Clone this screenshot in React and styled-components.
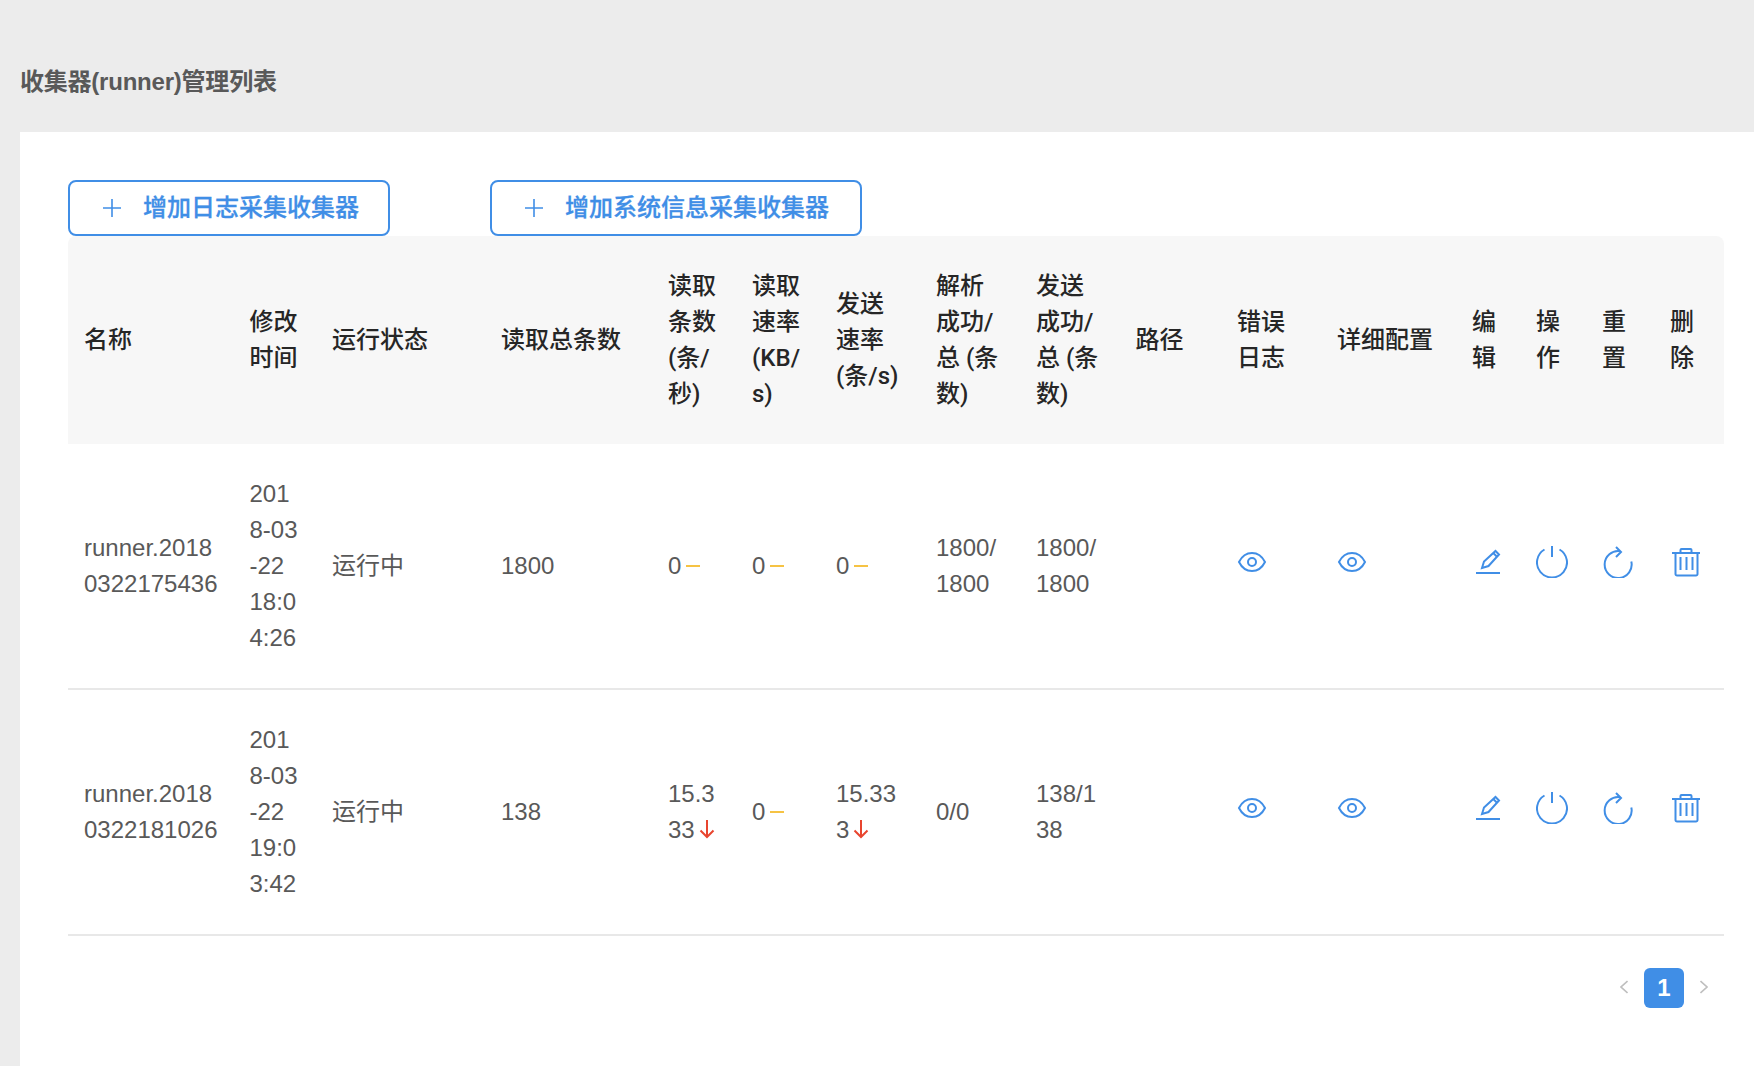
import styled, { createGlobalStyle } from 'styled-components';

const GlobalStyle = createGlobalStyle`
  html, body {
    margin: 0;
    padding: 0;
    background: #ececec;
  }
  * {
    box-sizing: border-box;
  }
`;

const Page = styled.div`
  min-height: 1066px;
  display: flex;
  flex-direction: column;
  background: #ececec;
  font-family: 'Liberation Sans', 'Noto Sans CJK SC', sans-serif;
  font-size: 24px;
  line-height: 36px;
  color: #595959;
`;

const PageHeader = styled.div`
  height: 132px;
  padding: 64px 0 0 20px;
  font-weight: 700;
  letter-spacing: -0.22px;
  color: #595959;
`;

const Content = styled.div`
  flex: 1;
  margin-left: 20px;
  padding: 48px 30px 0 48px;
  background: #fff;
`;

const Toolbar = styled.div`
  display: flex;
  gap: 100px;
`;

const AddButton = styled.button`
  height: 56px;
  padding: 0 ${(p) => p.$right}px 0 33px;
  display: flex;
  align-items: center;
  gap: 22px;
  background: #fff;
  border: 2px solid #408ee6;
  border-radius: 8px;
  color: #408ee6;
  font: inherit;
  font-weight: 500;
  -webkit-text-stroke: 0.3px #408ee6;
`;

const Table = styled.table`
  width: 100%;
  table-layout: fixed;
  border-collapse: separate;
  border-spacing: 0;
`;

const Col = styled.col`
  width: ${(p) => p.$w}px;
`;

const Th = styled.th`
  padding: 32px 16px;
  background: #f7f7f7;
  color: #262626;
  font-family: Roboto, 'Noto Sans CJK SC', sans-serif;
  font-weight: 500;
  text-align: left;
  vertical-align: middle;
  word-break: break-all;

  &:first-child {
    border-top-left-radius: 8px;
  }
  &:last-child {
    border-top-right-radius: 8px;
  }
`;

const Td = styled.td`
  padding: 32px 16px;
  border-bottom: 2px solid #e8e8e8;
  vertical-align: middle;
  word-break: break-all;
`;

const Icon = styled.svg`
  display: inline-block;
  width: 32px;
  height: 32px;
  vertical-align: -2px;
  fill: none;
  stroke: #408ee6;
  stroke-width: 2;
`;

const Trend = styled.svg`
  display: inline-block;
  width: 16px;
  height: 20px;
  margin-left: 4px;
  vertical-align: -2px;
  fill: none;
  stroke: ${(p) => p.$color};
  stroke-width: 2;
`;

const Pagination = styled.div`
  margin: 32px 16px 0 0;
  display: flex;
  justify-content: flex-end;
  align-items: center;
  gap: 16px;
`;

const PageArrow = styled.svg`
  width: 8px;
  height: 14px;
  margin-bottom: 2px;
  fill: none;
  stroke: #bfbfbf;
  stroke-width: 1.6;
`;

const PageNumber = styled.div`
  width: 40px;
  height: 40px;
  border-radius: 6px;
  background: #408ee6;
  color: #fff;
  font-weight: 700;
  line-height: 40px;
  text-align: center;
`;

const colWidths = [165.5, 82.5, 169, 167, 84, 84, 100, 100, 99.5, 101.5, 100, 135, 64, 66, 68, 70];

const headers = [
  '名称',
  '修改时间',
  '运行状态',
  '读取总条数',
  '读取条数(条/秒)',
  '读取速率(KB/s)',
  '发送速率(条/s)',
  '解析成功/总 (条数)',
  '发送成功/总 (条数)',
  '路径',
  '错误日志',
  '详细配置',
  '编辑',
  '操作',
  '重置',
  '删除',
];

const rows = [
  {
    name: 'runner.20180322175436',
    time: '2018-03-22 18:04:26',
    total: '1800',
    readCount: ['0', 'flat'],
    readRate: ['0', 'flat'],
    sendRate: ['0', 'flat'],
    parsed: '1800/1800',
    sent: '1800/1800',
  },
  {
    name: 'runner.20180322181026',
    time: '2018-03-22 19:03:42',
    total: '138',
    readCount: ['15.333', 'down'],
    readRate: ['0', 'flat'],
    sendRate: ['15.333', 'down'],
    parsed: '0/0',
    sent: '138/138',
  },
];

function PlusIcon() {
  return (
    <svg width="18" height="18" viewBox="0 0 18 18" fill="none" stroke="#408ee6" strokeWidth="1.6">
      <path d="M9 0v18M0 9h18" />
    </svg>
  );
}

function TrendMark({ kind }) {
  if (kind === 'down') {
    return (
      <Trend $color="#e8452f" viewBox="0 0 16 20">
        <path d="M8 0v17M1.5 10.5 8 17l6.5-6.5" />
      </Trend>
    );
  }
  return (
    <Trend $color="#f6c344" viewBox="0 0 16 20">
      <path d="M1 10h14" />
    </Trend>
  );
}

function EyeIcon() {
  return (
    <Icon viewBox="0 0 32 32">
      <path d="M2 16C5 10 10 7 15 7s10 3 13 9c-3 6-8 9-13 9S5 22 2 16z" />
      <circle cx="15" cy="16" r="4" />
    </Icon>
  );
}

function EditIcon() {
  return (
    <Icon viewBox="0 0 32 32">
      <path d="M4 27h24" />
      <path d="M10 22l2-6.5L23.5 5l3.5 3.5L16.5 20z" />
      <path d="M21.5 7.2 25 10.7" />
    </Icon>
  );
}

function PowerIcon() {
  return (
    <Icon viewBox="0 0 32 32">
      <path d="M8.5 3.5a15 15 0 1 0 15 0" />
      <path d="M16 0v11" />
    </Icon>
  );
}

function ResetIcon() {
  return (
    <Icon viewBox="0 0 32 32">
      <path d="M29.3 15.5A13.5 13.5 0 1 1 18 5.2" />
      <path d="M14 1l5 5-5 5" />
    </Icon>
  );
}

function TrashIcon() {
  return (
    <Icon viewBox="0 0 32 32">
      <path d="M2 7h28" />
      <path d="M10.5 7V4a1 1 0 0 1 1-1h9a1 1 0 0 1 1 1v3" />
      <path d="M5.5 7v21a1.5 1.5 0 0 0 1.5 1.5h19a1.5 1.5 0 0 0 1.5-1.5V7" />
      <path d="M10.5 11v13M16.5 11v13M22.5 11v13" />
    </Icon>
  );
}

export default function App() {
  return (
    <Page>
      <GlobalStyle />
      <PageHeader>收集器(runner)管理列表</PageHeader>
      <Content>
        <Toolbar>
          <AddButton $right={29}>
            <PlusIcon />
            增加日志采集收集器
          </AddButton>
          <AddButton $right={31}>
            <PlusIcon />
            增加系统信息采集收集器
          </AddButton>
        </Toolbar>
        <Table>
          <colgroup>
            {colWidths.map((w, i) => (
              <Col key={i} $w={w} />
            ))}
          </colgroup>
          <thead>
            <tr>
              {headers.map((h) => (
                <Th key={h}>{h}</Th>
              ))}
            </tr>
          </thead>
          <tbody>
            {rows.map((row) => (
              <tr key={row.name}>
                <Td>{row.name}</Td>
                <Td>{row.time}</Td>
                <Td>运行中</Td>
                <Td>{row.total}</Td>
                <Td>
                  {row.readCount[0]}
                  <TrendMark kind={row.readCount[1]} />
                </Td>
                <Td>
                  {row.readRate[0]}
                  <TrendMark kind={row.readRate[1]} />
                </Td>
                <Td>
                  {row.sendRate[0]}
                  <TrendMark kind={row.sendRate[1]} />
                </Td>
                <Td>{row.parsed}</Td>
                <Td>{row.sent}</Td>
                <Td></Td>
                <Td>
                  <EyeIcon />
                </Td>
                <Td>
                  <EyeIcon />
                </Td>
                <Td>
                  <EditIcon />
                </Td>
                <Td>
                  <PowerIcon />
                </Td>
                <Td>
                  <ResetIcon />
                </Td>
                <Td>
                  <TrashIcon />
                </Td>
              </tr>
            ))}
          </tbody>
        </Table>
        <Pagination>
          <PageArrow viewBox="0 0 8 14">
            <path d="M7.5 1 1 7l6.5 6" />
          </PageArrow>
          <PageNumber>1</PageNumber>
          <PageArrow viewBox="0 0 8 14">
            <path d="M.5 1 7 7l-6.5 6" />
          </PageArrow>
        </Pagination>
      </Content>
    </Page>
  );
}
